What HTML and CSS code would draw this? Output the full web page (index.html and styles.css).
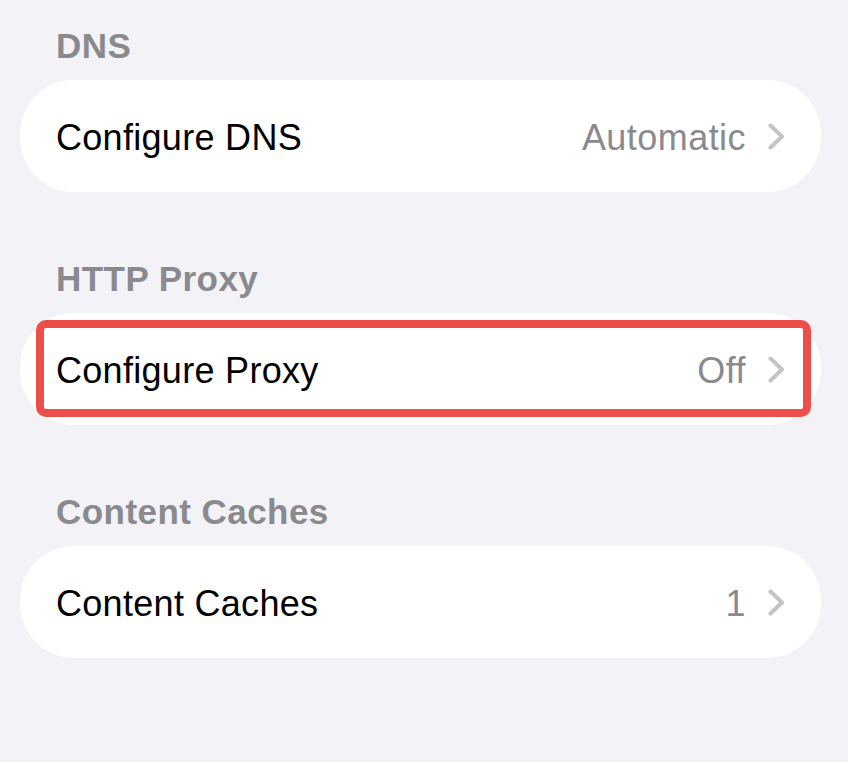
FILE: index.html
```html
<!DOCTYPE html>
<html>
<head>
<meta charset="utf-8">
<link rel="stylesheet" href="styles.css">
</head>
<body>
  <section class="group">
    <h2 class="group-title">DNS</h2>
    <div class="card">
      <span class="row-title">Configure DNS</span>
      <span class="row-value">Automatic</span>
      <svg class="chev" viewBox="0 0 17 27" width="17" height="27"><path d="M2.5 2.5 L14 13.5 L2.5 24.5" fill="none" stroke="#c4c4c7" stroke-width="4" stroke-linecap="round" stroke-linejoin="round"/></svg>
    </div>
  </section>
  <section class="group">
    <h2 class="group-title">HTTP Proxy</h2>
    <div class="card">
      <span class="row-title">Configure Proxy</span>
      <span class="row-value">Off</span>
      <svg class="chev" viewBox="0 0 17 27" width="17" height="27"><path d="M2.5 2.5 L14 13.5 L2.5 24.5" fill="none" stroke="#c4c4c7" stroke-width="4" stroke-linecap="round" stroke-linejoin="round"/></svg>
      <div class="highlight"></div>
    </div>
  </section>
  <section class="group">
    <h2 class="group-title">Content Caches</h2>
    <div class="card">
      <span class="row-title">Content Caches</span>
      <span class="row-value">1</span>
      <svg class="chev" viewBox="0 0 17 27" width="17" height="27"><path d="M2.5 2.5 L14 13.5 L2.5 24.5" fill="none" stroke="#c4c4c7" stroke-width="4" stroke-linecap="round" stroke-linejoin="round"/></svg>
    </div>
  </section>
</body>
</html>
```
FILE: styles.css
```css
html, body {
  margin: 0;
  background: #f2f2f7;
}
body {
  padding: 26px 27px 0 20px;
  font-family: "Liberation Sans", Arial, sans-serif;
  display: flex;
  flex-direction: column;
  gap: 67px;
}
.group {
  display: flex;
  flex-direction: column;
  gap: 14px;
}
.group-title {
  margin: 0;
  padding-left: 36px;
  font-size: 35px;
  line-height: 40px;
  height: 40px;
  font-weight: 700;
  letter-spacing: 0.45px;
  color: #8a8a8e;
}
.card {
  position: relative;
  box-sizing: border-box;
  height: 112px;
  background: #fff;
  border-radius: 54px;
  display: flex;
  align-items: center;
  padding: 4px 36px 0 36px;
}
.row-title {
  flex: 1;
  font-size: 36px;
  letter-spacing: 0.3px;
  color: #000;
}
.row-value {
  font-size: 36px;
  color: #8a8a8e;
  letter-spacing: 0.45px;
}
.chev {
  margin-left: 22px;
  margin-top: -4px;
  display: block;
}
.highlight {
  position: absolute;
  left: 16px;
  top: 7px;
  right: 10px;
  bottom: 8px;
  border: 8px solid #ec4f4a;
  border-radius: 10px;
}
```
